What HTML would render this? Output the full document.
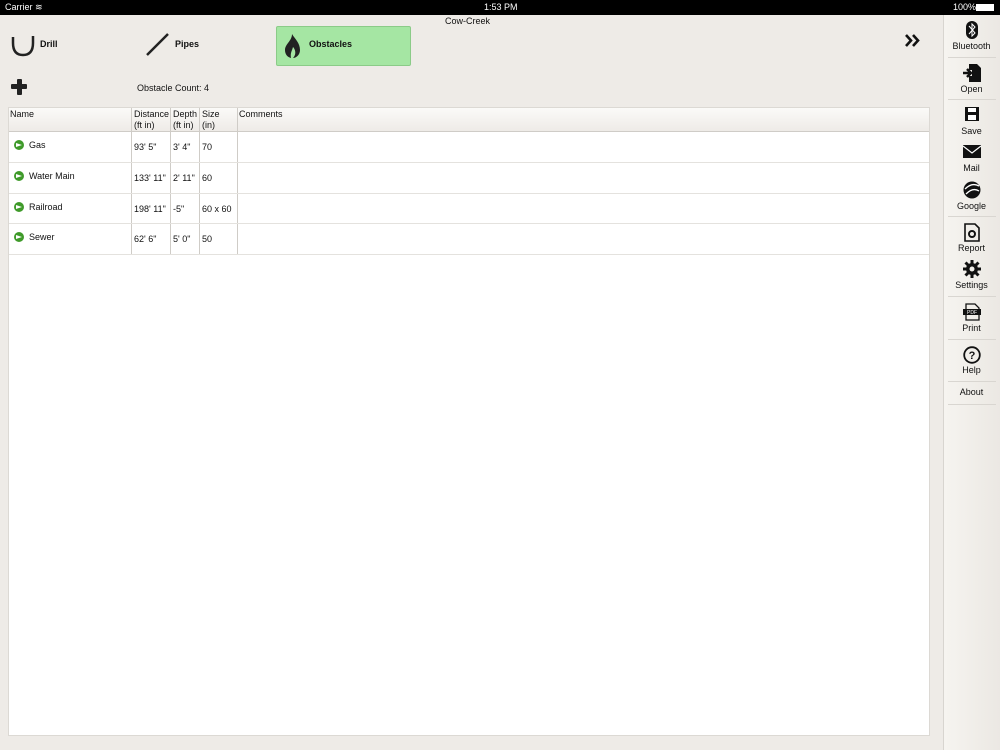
<!DOCTYPE html>
<html><head><style>
*{margin:0;padding:0;box-sizing:border-box}
body{width:1000px;height:750px;background:#eeebe7;font-family:"Liberation Sans",Arial,sans-serif;position:relative;overflow:hidden;color:#111}
.status{position:absolute;left:0;top:0;width:1000px;height:15px;background:#000;color:#fff;font-size:9px}
.abs{position:absolute}
.side{position:absolute;left:943px;top:15px;width:57px;height:735px;background:linear-gradient(90deg,#f6f4f0,#ebe8e3);border-left:1px solid #d8d5d0}
.si{position:absolute;left:-1px;width:57px;text-align:center;font-size:9px}
.sep{position:absolute;left:4px;width:48px;height:1px;background:#d9d6d1}
.tbl{position:absolute;left:8px;top:107px;width:922px;height:629px;background:#fff;border:1px solid #dcd9d4}
.hdr{position:absolute;left:0;top:0;width:920px;height:24px;background:linear-gradient(#fbfaf8,#eeebe7);border-bottom:1px solid #cfccc7}
.t{position:absolute;font-size:9px;line-height:11px}
.vl{position:absolute;top:0;width:1px;height:146px;background:#cfccc7}
.rl{position:absolute;left:0;width:920px;height:1px;background:#e4e2de}
.arr{position:absolute;left:5px;width:10px;height:10px;border-radius:50%;background:#3f9a2a}
.arr:after{content:"";position:absolute;left:2px;top:3px;width:0;height:0;border-left:6px solid #fff;border-top:2px solid transparent;border-bottom:2px solid transparent}
</style></head><body>
<div class="status"><span class="abs" style="left:5px;top:2px">Carrier ≋</span><span class="abs" style="left:484px;top:2px">1:53 PM</span><span class="abs" style="left:953px;top:2px">100%</span><span class="abs" style="left:976px;top:4px;width:18px;height:7px;background:#fff"></span></div>
<div class="abs" style="left:445px;top:16px;font-size:9px">Cow-Creek</div>

<svg class="abs" style="left:10px;top:33px" width="28" height="26"><path d="M3 4 L3 10 Q3 22 13 22 Q23 22 23 10 L23 3" fill="none" stroke="#222" stroke-width="2.5"/></svg>
<div class="abs" style="left:40px;top:39px;font-size:9px;font-weight:bold">Drill</div>
<svg class="abs" style="left:145px;top:32px" width="26" height="26"><path d="M2 23 L23 2" stroke="#222" stroke-width="2.5"/></svg>
<div class="abs" style="left:175px;top:39px;font-size:9px;font-weight:bold">Pipes</div>
<div class="abs" style="left:276px;top:26px;width:135px;height:40px;background:#a5e6a3;border:1px solid #8bcb88;border-radius:2px"></div>
<svg class="abs" style="left:283px;top:33px" width="20" height="26"><path d="M9 1 C12 6 17 10 17 17 C17 22 13 25 10 25 C14 21 12 16 10 14 C9 18 7 20 8 25 C4 24 2 21 2 17 C2 11 9 8 9 1Z" fill="#222"/></svg>
<div class="abs" style="left:309px;top:39px;font-size:9px;font-weight:bold">Obstacles</div>
<svg class="abs" style="left:904px;top:33px" width="16" height="15"><path d="M2 2 L7 7.5 L2 13 M9 2 L14 7.5 L9 13" fill="none" stroke="#111" stroke-width="2.6"/></svg>

<div class="abs" style="left:11px;top:84px;width:16px;height:5px;background:#222;border-radius:1px"></div>
<div class="abs" style="left:16.5px;top:79px;width:5px;height:16px;background:#222;border-radius:1px"></div>
<div class="abs" style="left:137px;top:83px;font-size:9px">Obstacle Count: 4</div>

<div class="tbl">
<div class="hdr"></div>
<div class="vl" style="left:122px"></div><div class="vl" style="left:161px"></div><div class="vl" style="left:190px"></div><div class="vl" style="left:228px"></div>
<div class="t" style="left:1px;top:1px">Name</div>
<div class="t" style="left:125px;top:1px">Distance<br>(ft in)</div>
<div class="t" style="left:164px;top:1px">Depth<br>(ft in)</div>
<div class="t" style="left:193px;top:1px">Size<br>(in)</div>
<div class="t" style="left:230px;top:1px">Comments</div>
<div class="rl" style="top:54px"></div><div class="rl" style="top:85px"></div><div class="rl" style="top:115px"></div><div class="rl" style="top:146px"></div>
<div class="arr" style="top:32px"></div><div class="t" style="left:20px;top:32px">Gas</div><div class="t" style="left:125px;top:34px">93' 5"</div><div class="t" style="left:164px;top:34px">3' 4"</div><div class="t" style="left:193px;top:34px">70</div>
<div class="arr" style="top:63px"></div><div class="t" style="left:20px;top:63px">Water Main</div><div class="t" style="left:125px;top:65px">133' 11"</div><div class="t" style="left:164px;top:65px">2' 11"</div><div class="t" style="left:193px;top:65px">60</div>
<div class="arr" style="top:94px"></div><div class="t" style="left:20px;top:94px">Railroad</div><div class="t" style="left:125px;top:96px">198' 11"</div><div class="t" style="left:164px;top:96px">-5"</div><div class="t" style="left:193px;top:96px">60 x 60</div>
<div class="arr" style="top:124px"></div><div class="t" style="left:20px;top:124px">Sewer</div><div class="t" style="left:125px;top:126px">62' 6"</div><div class="t" style="left:164px;top:126px">5' 0"</div><div class="t" style="left:193px;top:126px">50</div>
</div>

<div class="side">
<div class="si" style="top:6px"><svg width="14" height="18"><rect x="1" y="0" width="12" height="18" rx="6" fill="#111"/><path d="M4 5 L10 12 L7 15 L7 3 L10 6 L4 13" fill="none" stroke="#fff" stroke-width="1"/></svg></div>
<div class="si" style="top:26px">Bluetooth</div>
<div class="sep" style="top:42px"></div>
<div class="si" style="top:49px"><svg width="18" height="18"><path d="M6 0 L14 0 L18 4 L18 18 L6 18 L6 12 L9 12 L9 6 L6 6Z" fill="#111"/><path d="M0 9 L7 9 M4 5 L8 9 L4 13" stroke="#111" stroke-width="2.5" fill="none"/></svg></div>
<div class="si" style="top:69px">Open</div>
<div class="sep" style="top:84px"></div>
<div class="si" style="top:92px"><svg width="14" height="14"><rect x="0" y="0" width="14" height="14" fill="#111"/><rect x="3" y="1" width="8" height="4" fill="#fff"/><rect x="3" y="8" width="8" height="5" fill="#fff"/></svg></div>
<div class="si" style="top:111px">Save</div>
<div class="si" style="top:130px"><svg width="18" height="13"><rect x="0" y="0" width="18" height="13" fill="#111"/><path d="M0 1 L9 8 L18 1" stroke="#fff" stroke-width="1.2" fill="none"/></svg></div>
<div class="si" style="top:148px">Mail</div>
<div class="si" style="top:166px"><svg width="18" height="18"><circle cx="9" cy="9" r="8.5" fill="#111"/><path d="M2 8 Q9 1 16 5 M3 13 Q10 6 16 10" stroke="#fff" stroke-width="1.3" fill="none"/></svg></div>
<div class="si" style="top:186px">Google</div>
<div class="sep" style="top:201px"></div>
<div class="si" style="top:208px"><svg width="16" height="19"><path d="M1 1 L11 1 L15 5 L15 18 L1 18Z" fill="none" stroke="#111" stroke-width="1.6"/><circle cx="8" cy="11" r="3" fill="none" stroke="#111" stroke-width="2"/></svg></div>
<div class="si" style="top:228px">Report</div>
<div class="si" style="top:245px"><svg width="18" height="18"><circle cx="9" cy="9" r="6" fill="#111"/><g stroke="#111" stroke-width="3"><path d="M9 0 V18 M0 9 H18 M2.5 2.5 L15.5 15.5 M15.5 2.5 L2.5 15.5"/></g><circle cx="9" cy="9" r="2.5" fill="#f0eee9"/></svg></div>
<div class="si" style="top:265px">Settings</div>
<div class="sep" style="top:281px"></div>
<div class="si" style="top:288px"><svg width="18" height="18"><path d="M3 1 L12 1 L16 5 L16 17 L3 17Z" fill="none" stroke="#111" stroke-width="1.3"/><rect x="0" y="6" width="18" height="6" fill="#111"/><text x="9" y="11" font-size="5" fill="#fff" text-anchor="middle" font-family="Liberation Sans">PDF</text></svg></div>
<div class="si" style="top:308px">Print</div>
<div class="sep" style="top:324px"></div>
<div class="si" style="top:331px"><svg width="18" height="18"><circle cx="9" cy="9" r="7.8" fill="none" stroke="#111" stroke-width="1.8"/><text x="9" y="13" font-size="11" font-weight="bold" text-anchor="middle" font-family="Liberation Sans" fill="#111">?</text></svg></div>
<div class="si" style="top:350px">Help</div>
<div class="sep" style="top:366px"></div>
<div class="si" style="top:372px">About</div>
<div class="sep" style="top:389px"></div>
</div>
</body></html>
